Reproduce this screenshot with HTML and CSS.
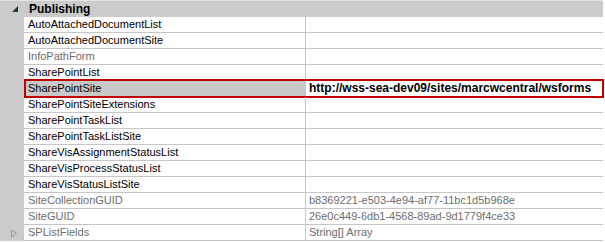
FILE: index.html
```html
<!DOCTYPE html>
<html lang="en">
<head>
  <meta charset="UTF-8" />
  <title>Properties</title>
  <link rel="stylesheet" href="styles.css">
</head>
<body>
  <div class="grid">
    <div class="category">
      <span class="gutter">
        <svg width="8" height="8" viewBox="0 0 8 8"><polygon points="7,1 7,7 1,7" fill="#333"/></svg>
      </span>
      <span class="cat-name">Publishing</span>
    </div>

    <div class="row"><span class="gutter"></span><span class="name">AutoAttachedDocumentList</span><span class="value"></span></div>
    <div class="row"><span class="gutter"></span><span class="name">AutoAttachedDocumentSite</span><span class="value"></span></div>
    <div class="row readonly"><span class="gutter"></span><span class="name">InfoPathForm</span><span class="value"></span></div>
    <div class="row"><span class="gutter"></span><span class="name">SharePointList</span><span class="value"></span></div>
    <div class="row selected"><span class="gutter"></span><span class="name">SharePointSite</span><span class="value">http://wss-sea-dev09/sites/marcwcentral/wsforms</span></div>
    <div class="row"><span class="gutter"></span><span class="name">SharePointSiteExtensions</span><span class="value"></span></div>
    <div class="row"><span class="gutter"></span><span class="name">SharePointTaskList</span><span class="value"></span></div>
    <div class="row"><span class="gutter"></span><span class="name">SharePointTaskListSite</span><span class="value"></span></div>
    <div class="row"><span class="gutter"></span><span class="name">ShareVisAssignmentStatusList</span><span class="value"></span></div>
    <div class="row"><span class="gutter"></span><span class="name">ShareVisProcessStatusList</span><span class="value"></span></div>
    <div class="row"><span class="gutter"></span><span class="name">ShareVisStatusListSite</span><span class="value"></span></div>
    <div class="row readonly"><span class="gutter"></span><span class="name">SiteCollectionGUID</span><span class="value">b8369221-e503-4e94-af77-11bc1d5b968e</span></div>
    <div class="row readonly"><span class="gutter"></span><span class="name">SiteGUID</span><span class="value">26e0c449-6db1-4568-89ad-9d1779f4ce33</span></div>
    <div class="row readonly">
      <span class="gutter">
        <svg width="8" height="9" viewBox="0 0 8 9"><polygon points="1.5,1 6.5,4.5 1.5,8" fill="none" stroke="#9a9a9a"/></svg>
      </span>
      <span class="name">SPListFields</span><span class="value">String[] Array</span>
    </div>
  </div>
</body>
</html>
```

FILE: styles.css
```css
body {
  margin: 0;
  background-color: #fff;
  font-family: "Liberation Sans", Arial, sans-serif;
  font-size: 11px;
}
.grid {
  width: 603px;
  border-top: 1px solid #e4e4e4;
  background-color: #fff;
}
.category {
  display: flex;
  align-items: center;
  height: 16px;
  background-color: #cbcbcb;
}
.gutter {
  width: 24px;
  flex: none;
  align-self: stretch;
  display: flex;
  align-items: center;
  justify-content: flex-end;
  padding-right: 6px;
  box-sizing: border-box;
  background-color: #cbcbcb;
}
.category .gutter {
  padding-right: 5px;
}
.cat-name {
  font-weight: bold;
  font-size: 12px;
  color: #000;
  padding-left: 5px;
}
.row {
  display: flex;
  height: 16px;
  position: relative;
}
.name {
  width: 282px;
  flex: none;
  box-sizing: border-box;
  padding-left: 4px;
  line-height: 15px;
  border-bottom: 1px solid #c6c6c6;
  border-right: 1px solid #c6c6c6;
  color: #000;
  white-space: nowrap;
}
.value {
  flex: 1;
  padding-left: 3px;
  line-height: 15px;
  border-bottom: 1px solid #c6c6c6;
  white-space: nowrap;
}
.readonly .name,
.readonly .value {
  color: #6d6d6d;
}
.selected .name {
  background-color: #c8c8c8;
}
.selected .value {
  font-weight: bold;
  font-size: 12px;
}
.selected::after {
  content: "";
  position: absolute;
  left: 24px;
  right: -1px;
  top: -2px;
  bottom: -1px;
  border: 2px solid #c00000;
  pointer-events: none;
}
```
